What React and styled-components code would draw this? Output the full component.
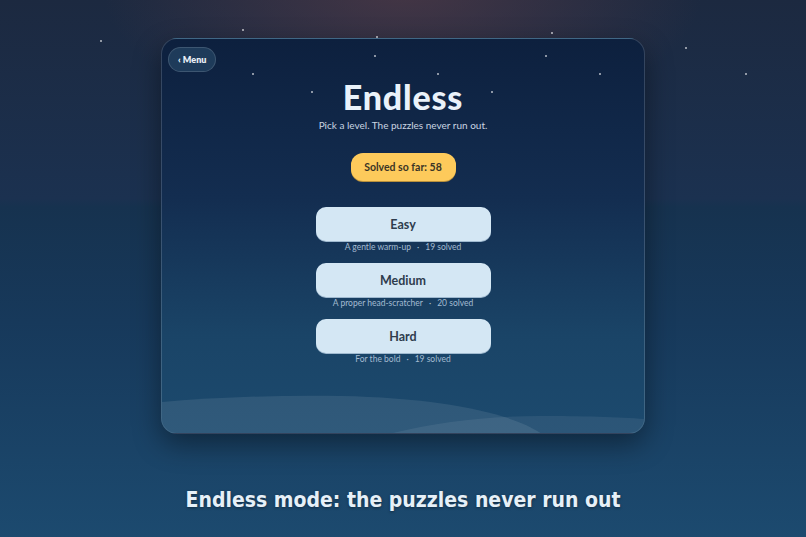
import React from "react";
import styled, { createGlobalStyle } from "styled-components";

const GlobalStyle = createGlobalStyle`
  html, body {
    margin: 0;
    padding: 0;
    height: 100%;
  }
  body {
    font-family: "Lato", "Open Sans", sans-serif;
    background: #173a5c;
  }
`;

const levels = [
  { name: "Easy", hint: "A gentle warm-up", solved: 19 },
  { name: "Medium", hint: "A proper head-scratcher", solved: 20 },
  { name: "Hard", hint: "For the bold", solved: 19 },
];

const stars = [
  [100, 40], [242, 29], [376, 36], [551, 32], [685, 47], [745, 73],
  [252, 73], [374, 55], [545, 55], [437, 73], [599, 73], [311, 91], [491, 91],
];

export default function App() {
  return (
    <Page>
      <GlobalStyle />
      <Card>
        <Hills viewBox="0 0 484 60" preserveAspectRatio="none">
          <path
            d="M0 29 C 60 24, 120 22, 180 23 C 280 25, 350 40, 380 60 L 0 60 Z"
            fill="rgba(255,255,255,0.09)"
          />
          <path
            d="M232 60 C 280 48, 330 43, 380 43 C 420 43, 460 44, 484 46 L 484 60 Z"
            fill="rgba(255,255,255,0.07)"
          />
        </Hills>
        <TopBar>
          <MenuButton>‹ Menu</MenuButton>
        </TopBar>
        <Titulo>Endless</Titulo>
        <Subtitulo>Pick a level. The puzzles never run out.</Subtitulo>
        <Contador>Solved so far: 58</Contador>
        <Lista>
          {levels.map((l) => (
            <Nivel key={l.name}>
              <BotaoNivel>{l.name}</BotaoNivel>
              <Dica>
                {l.hint}
                <Ponto>·</Ponto>
                {l.solved} solved
              </Dica>
            </Nivel>
          ))}
        </Lista>
      </Card>
      <Legenda>Endless mode: the puzzles never run out</Legenda>
      <Estrelas>
        {stars.map(([x, y], i) => (
          <Estrela key={i} style={{ left: x, top: y }} />
        ))}
      </Estrelas>
    </Page>
  );
}

const Page = styled.div`
  position: relative;
  width: 806px;
  height: 537px;
  overflow: hidden;
  display: flex;
  flex-direction: column;
  align-items: center;
  padding-top: 38px;
  box-sizing: border-box;
  background:
    radial-gradient(ellipse 300px 140px at 403px -10px, rgba(95, 62, 72, 0.6), rgba(95, 62, 72, 0) 100%),
    linear-gradient(180deg, #1c2940 0%, #1b3150 37%, #16324f 38.5%, #17395b 60%, #1c4a6f 100%);
`;

const Card = styled.div`
  position: relative;
  width: 484px;
  height: 396px;
  box-sizing: border-box;
  border-radius: 16px;
  border: 1px solid rgba(255, 255, 255, 0.16);
  background: linear-gradient(180deg, #0d203e 0%, #132d50 40%, #1a4467 75%, #1c4a6e 100%);
  box-shadow: 0 10px 28px rgba(0, 0, 0, 0.4);
  overflow: hidden;
  display: flex;
  flex-direction: column;
  align-items: center;
  padding: 8px 6px;
`;

const Hills = styled.svg`
  position: absolute;
  left: 0;
  bottom: 0;
  width: 100%;
  height: 60px;
`;

const TopBar = styled.div`
  align-self: stretch;
  display: flex;
`;

const MenuButton = styled.button`
  height: 25px;
  padding: 0 9px;
  border-radius: 13px;
  border: 1px solid rgba(255, 255, 255, 0.14);
  background: #1e3b5a;
  color: #e8eef5;
  font-family: "Lato", sans-serif;
  font-weight: 800;
  font-size: 9px;
`;

const Titulo = styled.h1`
  margin: 7px 0 0;
  font-family: "Lato", sans-serif;
  font-weight: 900;
  font-size: 34px;
  line-height: 36px;
  color: #eaf2fa;
  letter-spacing: 0.8px;
`;

const Subtitulo = styled.p`
  margin: 4px 0 0;
  font-size: 10px;
  line-height: 12px;
  color: #c9d5e2;
`;

const Contador = styled.div`
  margin-top: 22px;
  width: 105px;
  height: 28px;
  box-sizing: border-box;
  border-radius: 12px;
  background: #fdca5b;
  box-shadow: 0 1px 0 #b9903c;
  color: #3a3526;
  font-weight: 700;
  font-size: 10.5px;
  display: flex;
  align-items: center;
  justify-content: center;
`;

const Lista = styled.div`
  margin-top: 26px;
  display: flex;
  flex-direction: column;
  gap: 10px;
`;

const Nivel = styled.div`
  display: flex;
  flex-direction: column;
  align-items: center;
`;

const BotaoNivel = styled.button`
  width: 175px;
  height: 34px;
  border: none;
  border-radius: 10px;
  background: #d4e7f4;
  box-shadow: 0 1px 0 #9fb9cf;
  color: #2e3c4d;
  font-family: "Lato", sans-serif;
  font-weight: 700;
  font-size: 12.5px;
`;

const Dica = styled.div`
  margin-top: 1px;
  font-size: 8.5px;
  line-height: 11px;
  color: #a3bbd1;
`;

const Ponto = styled.span`
  margin: 0 6px;
`;

const Legenda = styled.div`
  margin-top: 53px;
  font-family: "DejaVu Sans Condensed", "DejaVu Sans", sans-serif;
  font-stretch: condensed;
  font-weight: 700;
  font-size: 21px;
  line-height: 26px;
  color: #e6f0f8;
  text-shadow: 0 1px 3px rgba(0, 0, 0, 0.4);
`;

const Estrelas = styled.div`
  position: absolute;
  inset: 0;
  pointer-events: none;
`;

const Estrela = styled.span`
  position: absolute;
  width: 2px;
  height: 2px;
  border-radius: 50%;
  background: rgba(255, 255, 255, 0.7);
`;
